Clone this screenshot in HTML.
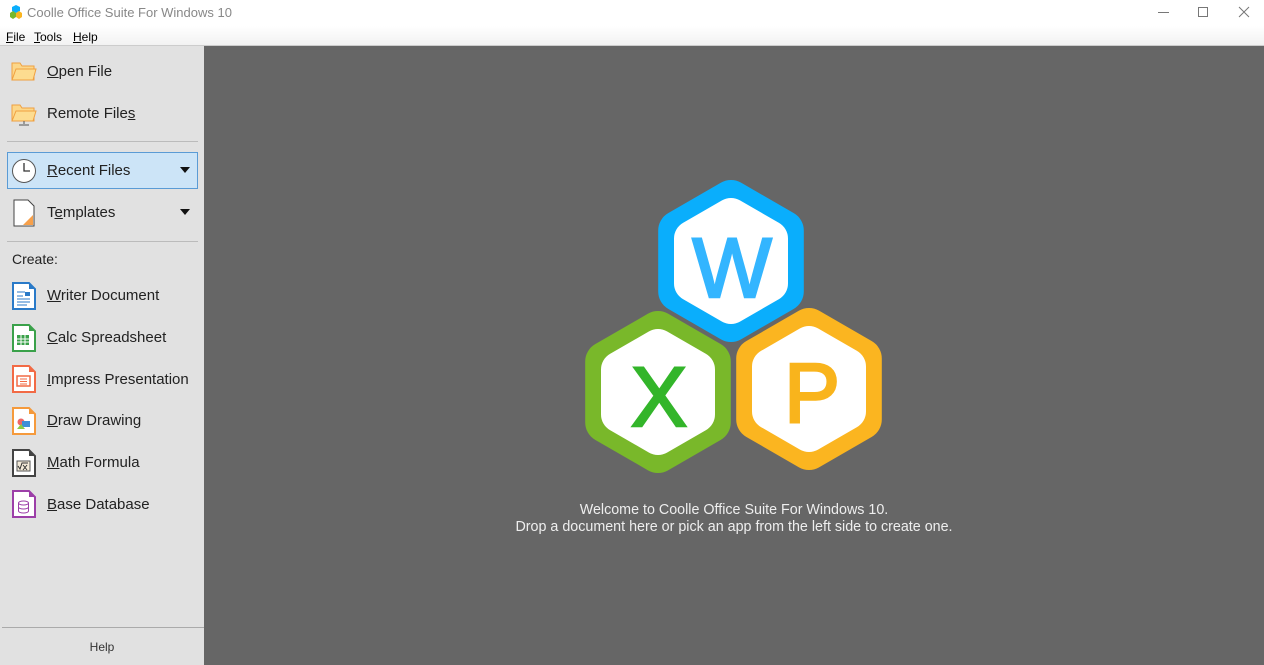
<!DOCTYPE html>
<html><head><style>
*{margin:0;padding:0;box-sizing:border-box}
body{width:1264px;height:665px;overflow:hidden;font-family:"Liberation Sans","DejaVu Sans",sans-serif;background:#fff;position:relative}
.title{position:absolute;left:0;top:0;width:1264px;height:26px;background:#fff;font-size:13px;color:#888}
.menu{position:absolute;left:0;top:26px;width:1264px;height:20px;background:linear-gradient(#fff,#f2f2f2);border-bottom:1px solid #ccc;font-size:12px;color:#000}
.menu span{position:absolute;top:4px}
.side{position:absolute;left:0;top:46px;width:204px;height:619px;background:#e1e1e1}
.main{position:absolute;left:204px;top:46px;width:1060px;height:619px;background:#666}
.it{position:absolute;left:47px;font-size:15px;color:#222}
.ic{position:absolute;left:11px}
.sep{position:absolute;left:7px;width:191px;height:1px;background:#bbb}
u{text-decoration:underline}
.tri{position:absolute;left:180px;width:0;height:0;border-left:5px solid transparent;border-right:5px solid transparent;border-top:6px solid #111}
.wel{position:absolute;left:204px;width:1060px;text-align:center;color:#eee;font-size:14.3px}
</style></head><body>
<div class="title">
<svg style="position:absolute;left:9px;top:5px" width="14" height="14"><polygon points="7,0 11,2 11,6 7,8 3,6 3,2" fill="#0aaefc"/><polygon points="4,6 7,8 7,12 4,14 1,12 1,8" fill="#79b82a"/><polygon points="10,6 13,8 13,12 10,14 7,12 7,8" fill="#fbb520"/></svg>
<span style="position:absolute;left:27px;top:5px">Coolle Office Suite For Windows 10</span>
<svg style="position:absolute;left:1150px;top:6px" width="110" height="14" stroke="#777" fill="none" stroke-width="1"><line x1="8" y1="6.5" x2="19" y2="6.5"/><rect x="48.5" y="1.5" width="9" height="9"/><path d="M89 1 L99 11 M99 1 L89 11"/></svg>
</div>
<div class="menu"><span style="left:6px"><u>F</u>ile</span><span style="left:34px"><u>T</u>ools</span><span style="left:73px"><u>H</u>elp</span></div>
<div class="side">
<svg class="ic" style="top:14px" width="26" height="22"><path d="M1 3 h8 l2 3 h12 v14 H1z" fill="#fcd78a" stroke="#f0a040"/><path d="M1 20 L5 9 H25 L22 20z" fill="#fddc90" stroke="#f0a040"/></svg>
<div class="it" style="top:17px"><u>O</u>pen File</div>
<svg class="ic" style="top:56px" width="26" height="24"><path d="M1 3 h8 l2 3 h12 v13 H1z" fill="#fcd78a" stroke="#f0a040"/><path d="M1 19 L5 9 H25 L22 19z" fill="#fddc90" stroke="#f0a040"/><path d="M13 19v3M8 23h10" stroke="#555"/></svg>
<div class="it" style="top:59px">Remote File<u>s</u></div>
<div class="sep" style="top:95px"></div>
<div style="position:absolute;left:7px;top:106px;width:191px;height:37px;background:#cce4f7;border:1px solid #5a9bd5"></div>
<svg class="ic" style="top:112px" width="26" height="26"><circle cx="13" cy="13" r="11.5" fill="#fff" stroke="#555"/><path d="M13 5v8h6" stroke="#333" fill="none" stroke-width="1.3"/></svg>
<div class="it" style="top:116px"><u>R</u>ecent Files</div><div class="tri" style="top:121px"></div>
<svg class="ic" style="top:153px" width="26" height="28"><path d="M3 1h14l6 6v20H3z" fill="#fff" stroke="#444"/><path d="M22 16v10h-10z" fill="#f7a04a"/></svg>
<div class="it" style="top:158px">T<u>e</u>mplates</div><div class="tri" style="top:163px"></div>
<div class="sep" style="top:195px"></div>
<div class="it" style="left:12px;top:205px;font-size:14px">Create:</div>
<svg class="ic" style="top:236px" width="26" height="28"><path d="M2 1h16l6 6v20H2z" fill="#fff" stroke="#2a7ac8" stroke-width="2"/><path d="M18 1l6 6h-6z" fill="#2a7ac8"/><path d="M6 10h8M6 14h6M6 17h13M6 20h13M6 23h10" stroke="#2a7ac8"/><rect x="14" y="10" width="5" height="4" fill="#2a7ac8"/></svg>
<div class="it" style="top:241px"><u>W</u>riter Document</div>
<svg class="ic" style="top:278px" width="26" height="28"><path d="M2 1h16l6 6v20H2z" fill="#fff" stroke="#3aa14a" stroke-width="2"/><path d="M18 1l6 6h-6z" fill="#3aa14a"/><rect x="6" y="11" width="12" height="10" fill="#3aa14a"/><path d="M6 15h12M6 18h12M10 11v10M14 11v10" stroke="#fff"/></svg>
<div class="it" style="top:283px"><u>C</u>alc Spreadsheet</div>
<svg class="ic" style="top:319px" width="26" height="28"><path d="M2 1h16l6 6v20H2z" fill="#fff" stroke="#f26a45" stroke-width="2"/><path d="M18 1l6 6h-6z" fill="#f26a45"/><rect x="6" y="11" width="13" height="10" fill="none" stroke="#f26a45" stroke-width="1.5"/><path d="M9 14h7M9 16.5h7M9 19h7" stroke="#f26a45"/></svg>
<div class="it" style="top:325px"><u>I</u>mpress Presentation</div>
<svg class="ic" style="top:361px" width="26" height="28"><path d="M2 1h16l6 6v20H2z" fill="#fff" stroke="#f59a3c" stroke-width="2"/><path d="M18 1l6 6h-6z" fill="#f59a3c"/><circle cx="10" cy="15" r="3.5" fill="#e66"/><rect x="11" y="14" width="8" height="6" fill="#3d8fd6"/><path d="M6 22l4-5 4 5z" fill="#8c4"/></svg>
<div class="it" style="top:366px"><u>D</u>raw Drawing</div>
<svg class="ic" style="top:403px" width="26" height="28"><path d="M2 1h16l6 6v20H2z" fill="#fff" stroke="#444" stroke-width="2"/><path d="M18 1l6 6h-6z" fill="#444"/><rect x="6" y="12" width="13" height="10" fill="#f3ead8" stroke="#555"/><path d="M7 17l2 3 2-6h6M12 16l4 5M16 16l-4 5" stroke="#333" fill="none"/></svg>
<div class="it" style="top:408px"><u>M</u>ath Formula</div>
<svg class="ic" style="top:444px" width="26" height="28"><path d="M2 1h16l6 6v20H2z" fill="#fff" stroke="#9c3fa8" stroke-width="2"/><path d="M18 1l6 6h-6z" fill="#9c3fa8"/><ellipse cx="12.5" cy="13" rx="5" ry="2" fill="none" stroke="#9c3fa8"/><path d="M7.5 13v8a5 2 0 0 0 10 0v-8M7.5 17a5 2 0 0 0 10 0" fill="none" stroke="#9c3fa8"/></svg>
<div class="it" style="top:450px"><u>B</u>ase Database</div>
<div class="sep" style="top:581px;left:2px;width:202px;height:1px;background:#aaa"></div>
<div style="position:absolute;left:0;width:204px;top:594px;text-align:center;font-size:12px;color:#333">Help</div>
</div>
<div class="main"></div>
<svg style="position:absolute;left:0;top:0" width="1264" height="665">
<defs>
<polygon id="o" points="0,-61 52.8,-30.5 52.8,30.5 0,61 -52.8,30.5 -52.8,-30.5"/>
<polygon id="i" points="0,-45 39,-22.5 39,22.5 0,45 -39,22.5 -39,-22.5"/>
</defs>
<g stroke-linejoin="round">
<g transform="translate(731,261)"><use href="#o" fill="#0aaefc" stroke="#0aaefc" stroke-width="40"/><use href="#i" fill="#fff" stroke="#fff" stroke-width="36"/></g>
<g transform="translate(658,392)"><use href="#o" fill="#79b82a" stroke="#79b82a" stroke-width="40"/><use href="#i" fill="#fff" stroke="#fff" stroke-width="36"/></g>
<g transform="translate(809,389)"><use href="#o" fill="#fbb520" stroke="#fbb520" stroke-width="40"/><use href="#i" fill="#fff" stroke="#fff" stroke-width="36"/></g>
</g>
<g font-family="Liberation Sans, sans-serif" font-size="84" text-anchor="middle" stroke-width="2.5">
<text x="732" y="297" fill="#33b5ff" stroke="#33b5ff">W</text>
<text x="659" y="426" fill="#33b52a" stroke="#33b52a">X</text>
<text x="812" y="422" fill="#f9b41c" stroke="#f9b41c">P</text>
</g>
</svg>
<div class="wel" style="top:502px">Welcome to Coolle Office Suite For Windows 10.</div>
<div class="wel" style="top:519px">Drop a document here or pick an app from the left side to create one.</div>
</body></html>
